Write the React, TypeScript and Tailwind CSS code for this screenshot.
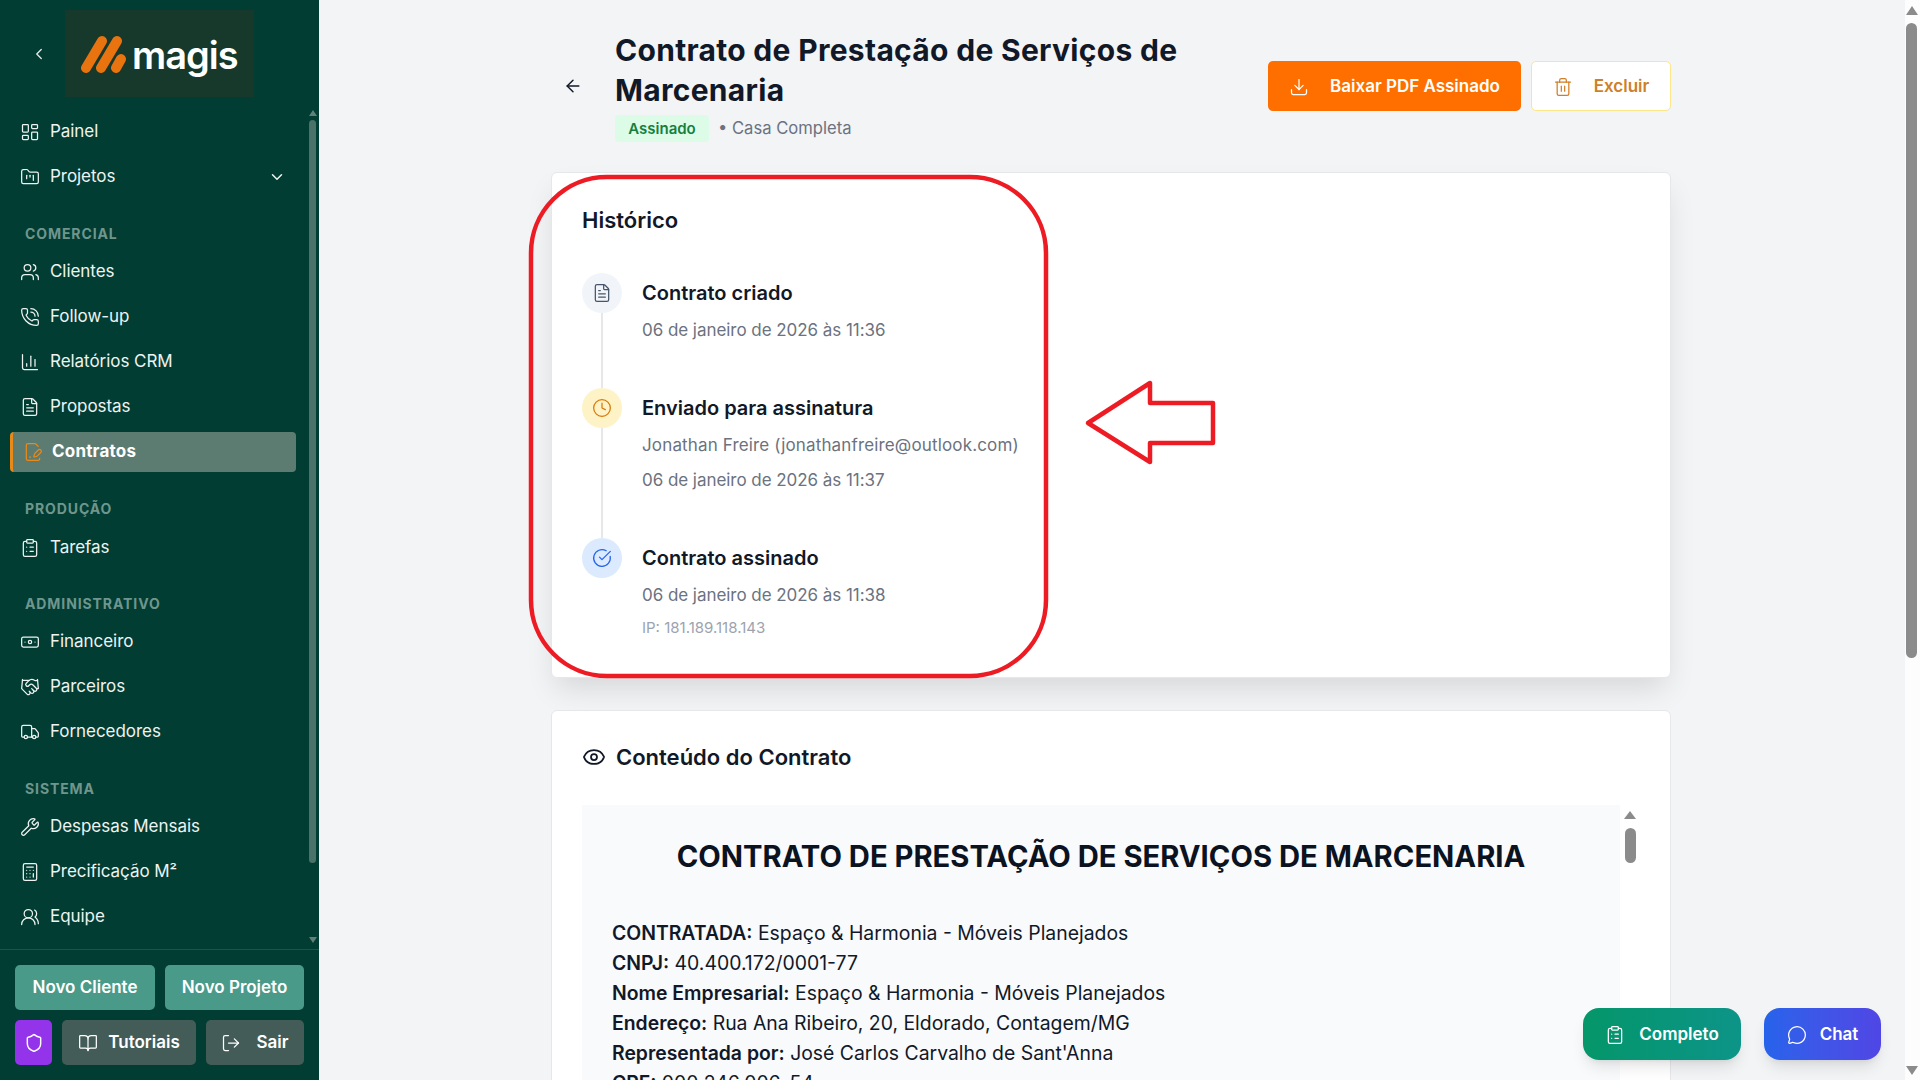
import React from "react";
import {
  LayoutDashboard, FolderKanban, ChevronDown, ChevronLeft, Users, PhoneCall, ChartColumn, FileText, FilePenLine,
  ClipboardList, Banknote, Handshake, Truck, Wrench, Calculator, UsersRound, Shield, BookOpen, LogOut,
  ArrowLeft, Download, Trash2, Clock, CircleCheckBig, Eye, MessageCircle,
} from "lucide-react";

const font = "font-['Inter','Liberation_Sans',sans-serif]";

function NavItem({ icon: Icon, label, right }: { icon: any; label: string; right?: boolean }) {
  return (
    <div className="flex h-[45px] items-center pt-[2px] pl-[20px] pr-[22px] text-[17px] tracking-[-0.05px] text-[#eef3f1]">
      <Icon size={20} strokeWidth={1.5} className="mr-[10px] shrink-0" />
      <span className="flex-1">{label}</span>
      {right && <ChevronDown size={18} strokeWidth={2} />}
    </div>
  );
}

function Section({ label, className }: { label: string; className: string }) {
  return (
    <div className={`pl-[25px] text-[14px] font-bold leading-[20px] tracking-[0.9px] text-[#6f968d] ${className}`}>{label}</div>
  );
}

function Sidebar() {
  return (
    <aside className="flex h-full w-[319px] shrink-0 flex-col bg-[#013d33]">
      <div className="flex h-[108px] shrink-0 items-start">
        <div className="flex h-[107px] w-[65px] items-center justify-center pl-[12px]">
          <ChevronLeft size={18} strokeWidth={1.75} className="text-[#e5ecea]" />
        </div>
        <div className="mt-[10px] flex h-[87px] w-[189px] items-center bg-[#16392b] pl-[14px]">
          <svg width="48" height="40" viewBox="0 0 48 40" className="shrink-0">
            <g stroke="#e8730f" strokeWidth="10" strokeLinecap="round" fill="none">
              <path d="M7 34 L23 7" />
              <path d="M22 34 L38 7" />
              <path d="M37 34 L42 25" />
            </g>
          </svg>
          <span className="ml-[5px] mt-[2px] text-[38px] font-semibold leading-none tracking-[-1px] text-white">magis</span>
        </div>
      </div>
      <div className="relative flex min-h-0 flex-1">
        <nav className="flex-1">
          <NavItem icon={LayoutDashboard} label="Painel" />
          <NavItem icon={FolderKanban} label="Projetos" right />
          <Section label="COMERCIAL" className="mt-[26px] mb-[4px]" />
          <NavItem icon={Users} label="Clientes" />
          <NavItem icon={PhoneCall} label="Follow-up" />
          <NavItem icon={ChartColumn} label="Relatórios CRM" />
          <NavItem icon={FileText} label="Propostas" />
          <div className="mt-[4px] ml-[10px] flex h-[40px] w-[286px] items-center rounded-[4px] border-l-[3px] border-[#e88a1a] bg-[#5c7c72] pl-[10px] text-[17px] font-bold tracking-[0.2px] text-white">
            <FilePenLine size={20} strokeWidth={1.5} className="mr-[9px] text-[#e88a1a]" />
            Contratos
          </div>
          <Section label="PRODUÇÃO" className="mt-[27px] mb-[5px]" />
          <NavItem icon={ClipboardList} label="Tarefas" />
          <Section label="ADMINISTRATIVO" className="mt-[25px] mb-[4px]" />
          <NavItem icon={Banknote} label="Financeiro" />
          <NavItem icon={Handshake} label="Parceiros" />
          <NavItem icon={Truck} label="Fornecedores" />
          <Section label="SISTEMA" className="mt-[26px] mb-[4px]" />
          <NavItem icon={Wrench} label="Despesas Mensais" />
          <NavItem icon={Calculator} label="Precificação M²" />
          <NavItem icon={UsersRound} label="Equipe" />
        </nav>
        <div className="mr-[2px] flex w-[9px] flex-col items-center pt-[2px]">
          <div className="mb-[4px] h-0 w-0 border-x-[4px] border-b-[6px] border-x-transparent border-b-[#5e8178]" />
          <div className="h-[743px] w-[7px] rounded-full bg-[#4a7268]" />
          <div className="mt-[74px] h-0 w-0 border-x-[4px] border-t-[6px] border-x-transparent border-t-[#5e8178]" />
        </div>
      </div>
      <div className="shrink-0 border-t border-[#1d5348] px-[15px] pt-[15px] pb-[15px]">
        <div className="flex gap-[10px]">
          <div className="flex h-[45px] w-[140px] items-center justify-center rounded-[5px] bg-[#4a9a8a] text-[17px] font-semibold text-white">Novo Cliente</div>
          <div className="flex h-[45px] w-[139px] items-center justify-center rounded-[5px] bg-[#4a9a8a] text-[17px] font-semibold text-white">Novo Projeto</div>
        </div>
        <div className="mt-[10px] flex gap-[10px]">
          <div className="flex h-[45px] w-[37px] items-center justify-center rounded-[5px] bg-[#9333ea]">
            <Shield size={20} strokeWidth={1.75} className="text-white" />
          </div>
          <div className="flex h-[45px] w-[134px] items-center justify-center gap-[10px] rounded-[5px] bg-[#445c58] text-[17px] font-semibold text-white">
            <BookOpen size={20} strokeWidth={1.5} />
            Tutoriais
          </div>
          <div className="flex h-[45px] w-[98px] items-center justify-center gap-[15px] rounded-[5px] bg-[#445c58] text-[17px] font-semibold text-white">
            <LogOut size={20} strokeWidth={1.5} />
            Sair
          </div>
        </div>
      </div>
    </aside>
  );
}

function Step({ icon: Icon, bg, color, last, title, lines, ip, height }: any) {
  return (
    <div className="relative flex" style={{ height }}>
      {!last && <div className="absolute top-[40px] bottom-0 left-[19px] w-[2px] bg-[#e5e7eb]" />}
      <div className={`relative flex h-[40px] w-[40px] shrink-0 items-center justify-center rounded-full ${bg}`}>
        <Icon size={20} strokeWidth={1.5} className={color} />
      </div>
      <div className="ml-[20px] pt-[8px]">
        <div className="text-[20px] font-semibold leading-[24px] text-[#111827]">{title}</div>
        <div className="mt-[13px] space-y-[11px]">
          {lines.map((l: string) => (
            <div key={l} className={l.startsWith("Jonathan") ? "text-[17px] leading-[24px] tracking-[0.15px] text-[#6b7280]" : "text-[17px] leading-[24px] tracking-[-0.05px] text-[#6b7280]"}>{l}</div>
          ))}
        </div>
        {ip && <div className="mt-[11px] text-[15px] leading-[20px] text-[#9ca3af]">{ip}</div>}
      </div>
    </div>
  );
}

function Main() {
  return (
    <main className="relative h-full min-w-0 flex-1 overflow-hidden bg-[#f3f4f6] pl-[232px]">
      <div className="w-[1120px]">
        <header className="flex items-center pt-[30px] pb-[30px]">
          <ArrowLeft size={20} strokeWidth={1.75} className="ml-[12px] text-[#111827]" />
          <div className="ml-[32px] w-[600px]">
            <h1 className="text-[30px] leading-[40px] font-bold tracking-[0.3px] text-[#111827]">Contrato de Prestação de Serviços de Marcenaria</h1>
            <div className="mt-[5px] flex items-center">
              <span className="flex h-[27px] w-[94px] items-center justify-center rounded-[4px] bg-[#dcfce7] pt-[2px] text-[15px] font-semibold text-[#15803d]">Assinado</span>
              <span className="ml-[9px] text-[16.6px] text-[#6b7280]">• Casa Completa</span>
            </div>
          </div>
          <div className="ml-auto flex gap-[10px]">
            <div className="flex h-[50px] w-[253px] items-center justify-center gap-[21px] rounded-[5px] bg-[#ff6f00] pt-[2px] text-[17px] font-semibold text-white">
              <Download size={20} strokeWidth={1.5} />
              Baixar PDF Assinado
            </div>
            <div className="flex h-[50px] w-[140px] items-center justify-center gap-[21px] rounded-[5px] border border-[#fde68a] bg-white pt-[2px] text-[17px] font-semibold text-[#d07f26]">
              <Trash2 size={20} strokeWidth={1.5} />
              Excluir
            </div>
          </div>
        </header>

        <section className="h-[506px] rounded-[6px] border border-[#e5e7eb] bg-white pt-[33px] pl-[30px] shadow-[0_15px_30px_-5px_rgba(0,0,0,0.12)]">
          <h2 className="text-[22px] leading-[28px] font-semibold text-[#111827]">Histórico</h2>
          <div className="mt-[39px]">
            <Step icon={FileText} bg="bg-[#f1f5f9]" color="text-[#475569]" title="Contrato criado" lines={["06 de janeiro de 2026 às 11:36"]} height={115} />
            <Step icon={Clock} bg="bg-[#fef3c7]" color="text-[#d97706]" title="Enviado para assinatura" lines={["Jonathan Freire (jonathanfreire@outlook.com)", "06 de janeiro de 2026 às 11:37"]} height={150} />
            <Step icon={CircleCheckBig} bg="bg-[#dbeafe]" color="text-[#2563eb]" last title="Contrato assinado" lines={["06 de janeiro de 2026 às 11:38"]} ip="IP: 181.189.118.143" height={110} />
          </div>
        </section>

        <section className="mt-[32px] rounded-[6px] border border-[#e5e7eb] bg-white pt-[32px] pl-[30px] pr-[30px]">
          <div className="flex items-center gap-[10px]">
            <Eye size={24} strokeWidth={1.75} className="text-[#111827]" />
            <h2 className="text-[22px] leading-[28px] font-semibold text-[#111827]">Conteúdo do Contrato</h2>
          </div>
          <div className="mt-[34px] flex h-[300px] bg-[#f9fafb]">
            <div className="flex-1 px-[30px] pt-[35px]">
              <h3 className="text-center text-[29.2px] leading-[34px] font-bold text-[#0b1220]">CONTRATO DE PRESTAÇÃO DE SERVIÇOS DE MARCENARIA</h3>
              <div className="mt-[44px] text-[19.4px] leading-[30px] text-[#111827]">
                <p><b className="font-semibold">CONTRATADA:</b> Espaço &amp; Harmonia - Móveis Planejados</p>
                <p><b className="font-semibold">CNPJ:</b> 40.400.172/0001-77</p>
                <p><b className="font-semibold">Nome Empresarial:</b> Espaço &amp; Harmonia - Móveis Planejados</p>
                <p><b className="font-semibold">Endereço:</b> Rua Ana Ribeiro, 20, Eldorado, Contagem/MG</p>
                <p><b className="font-semibold">Representada por:</b> José Carlos Carvalho de Sant'Anna</p>
                <p><b className="font-semibold">CPF:</b> 000.246.006-54</p>
              </div>
            </div>
            <div className="flex w-[20px] shrink-0 flex-col items-center bg-white pt-[6px]">
              <div className="h-0 w-0 border-x-[6px] border-b-[8px] border-x-transparent border-b-[#8b8b8b]" />
              <div className="mt-[9px] h-[35px] w-[11px] rounded-full bg-[#8b8b8b]" />
            </div>
          </div>
        </section>
      </div>

      <div className="absolute right-[24px] bottom-[20px] flex gap-[23px]">
        <div className="flex h-[52px] w-[158px] items-center justify-center gap-[14px] rounded-[16px] bg-gradient-to-r from-[#059669] to-[#0d9488] pt-[2px] text-[17px] font-semibold text-white shadow-lg">
          <ClipboardList size={20} strokeWidth={1.5} />
          Completo
        </div>
        <div className="flex h-[52px] w-[117px] items-center justify-center gap-[13px] rounded-[16px] bg-gradient-to-r from-[#2563eb] to-[#4f46e5] pt-[2px] text-[17px] font-semibold text-white shadow-lg">
          <MessageCircle size={20} strokeWidth={1.5} />
          Chat
        </div>
      </div>

      <svg className="pointer-events-none absolute top-0 left-0" width="1586" height="1080" viewBox="319 0 1586 1080" fill="none">
        <rect x="531" y="177" width="515" height="499" rx="76" ry="76" stroke="#ed1c24" strokeWidth="4.5" />
        <path d="M1088 423 L1150 383 L1150 403 L1213 403 L1213 443 L1150 443 L1150 462 Z" stroke="#ed1c24" strokeWidth="4.5" strokeLinejoin="round" />
      </svg>
    </main>
  );
}

export default function App() {
  return (
    <div className={`flex h-screen w-full overflow-hidden ${font}`}>
      <Sidebar />
      <Main />
      <div className="flex w-[15px] shrink-0 flex-col items-center bg-[#fdfdfd] pt-[6px] pb-[5px]">
        <div className="h-0 w-0 -translate-x-[1px] border-x-[6px] border-b-[9px] border-x-transparent border-b-[#8b8b8b]" />
        <div className="mt-[8px] h-[635px] w-[11px] -translate-x-[1px] rounded-full bg-[#8b8b8b]" />
        <div className="mt-auto h-0 w-0 -translate-x-[1px] border-x-[6px] border-t-[9px] border-x-transparent border-t-[#8b8b8b]" />
      </div>
    </div>
  );
}
